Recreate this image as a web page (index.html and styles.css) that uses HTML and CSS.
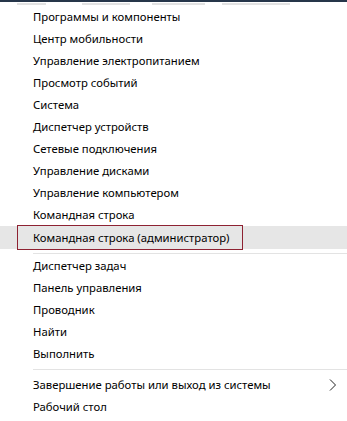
FILE: index.html
```html
<!DOCTYPE html>
<html>
<head>
    <meta charset="utf-8">
    <title>win+x menu</title>
<link rel="stylesheet" href="styles.css">
</head>
<body>
    <div class="taskbar">
        <span class="ghost g1"></span>
        <span class="ghost g2"></span>
        <span class="ghost g3"></span>
        <span class="ghost g4"></span>
    </div>
    <ul class="menu">
        <li>Программы и компоненты</li>
        <li>Центр мобильности</li>
        <li>Управление электропитанием</li>
        <li>Просмотр событий</li>
        <li>Система</li>
        <li>Диспетчер устройств</li>
        <li>Сетевые подключения</li>
        <li>Управление дисками</li>
        <li>Управление компьютером</li>
        <li>Командная строка</li>
        <li class="active"><span class="mark">Командная строка (администратор)</span></li>
    </ul>
    <hr class="sep1">
    <ul class="menu">
        <li>Диспетчер задач</li>
        <li>Панель управления</li>
        <li>Проводник</li>
        <li>Найти</li>
        <li>Выполнить</li>
    </ul>
    <hr class="sep2">
    <ul class="menu">
        <li class="sub">Завершение работы или выход из системы
            <svg class="arrow" width="8" height="12" viewBox="0 0 8 12">
                <path d="M1 0.5 L6.5 6 L1 11.5" fill="none" stroke="#222" stroke-width="1"/>
            </svg>
        </li>
        <li>Рабочий стол</li>
    </ul>
</body>
</html>
```

FILE: styles.css
```css
*{
    margin: 0;
    padding: 0;
}
body{
    background: #fff;
    width: 347px;
    height: 421px;
    overflow: hidden;
    font-family: "Noto Sans", "Open Sans", sans-serif;
    font-size: 11.3px;
    color: #000;
}
.taskbar{
    height: 4px;
    border-top: 2px solid #26364a;
    display: flex;
}
.ghost{
    display: block;
    height: 2px;
    margin-top: 1px;
    background: #e2e2e2;
}
.g1{ margin-left: 17px; width: 29px; }
.g2{ margin-left: 36px; width: 48px; }
.g3{ margin-left: 22px; width: 53px; }
.g4{ margin-left: 17px; width: 68px; }
.menu{
    list-style: none;
}
.menu li{
    height: 22px;
    line-height: 22px;
    padding-left: 33px;
    white-space: nowrap;
}
.menu li.active{
    height: 23px;
    line-height: 23px;
    padding-left: 17px;
    background: #e6e6e6;
}
.mark{
    display: inline-block;
    box-sizing: border-box;
    width: 226px;
    height: 25px;
    line-height: 23px;
    margin-top: -2px;
    padding-left: 15px;
    border: 1px solid #8e2232;
}
hr{
    border: none;
    border-top: 1px solid #e3e3e3;
    margin-left: 33px;
}
.sep1{
    margin-top: 4px;
    margin-bottom: 1px;
}
.sep2{
    margin-top: 4px;
    margin-bottom: 4px;
}
.menu li.sub{
    display: flex;
    align-items: center;
    justify-content: space-between;
    padding-right: 10px;
}
```
